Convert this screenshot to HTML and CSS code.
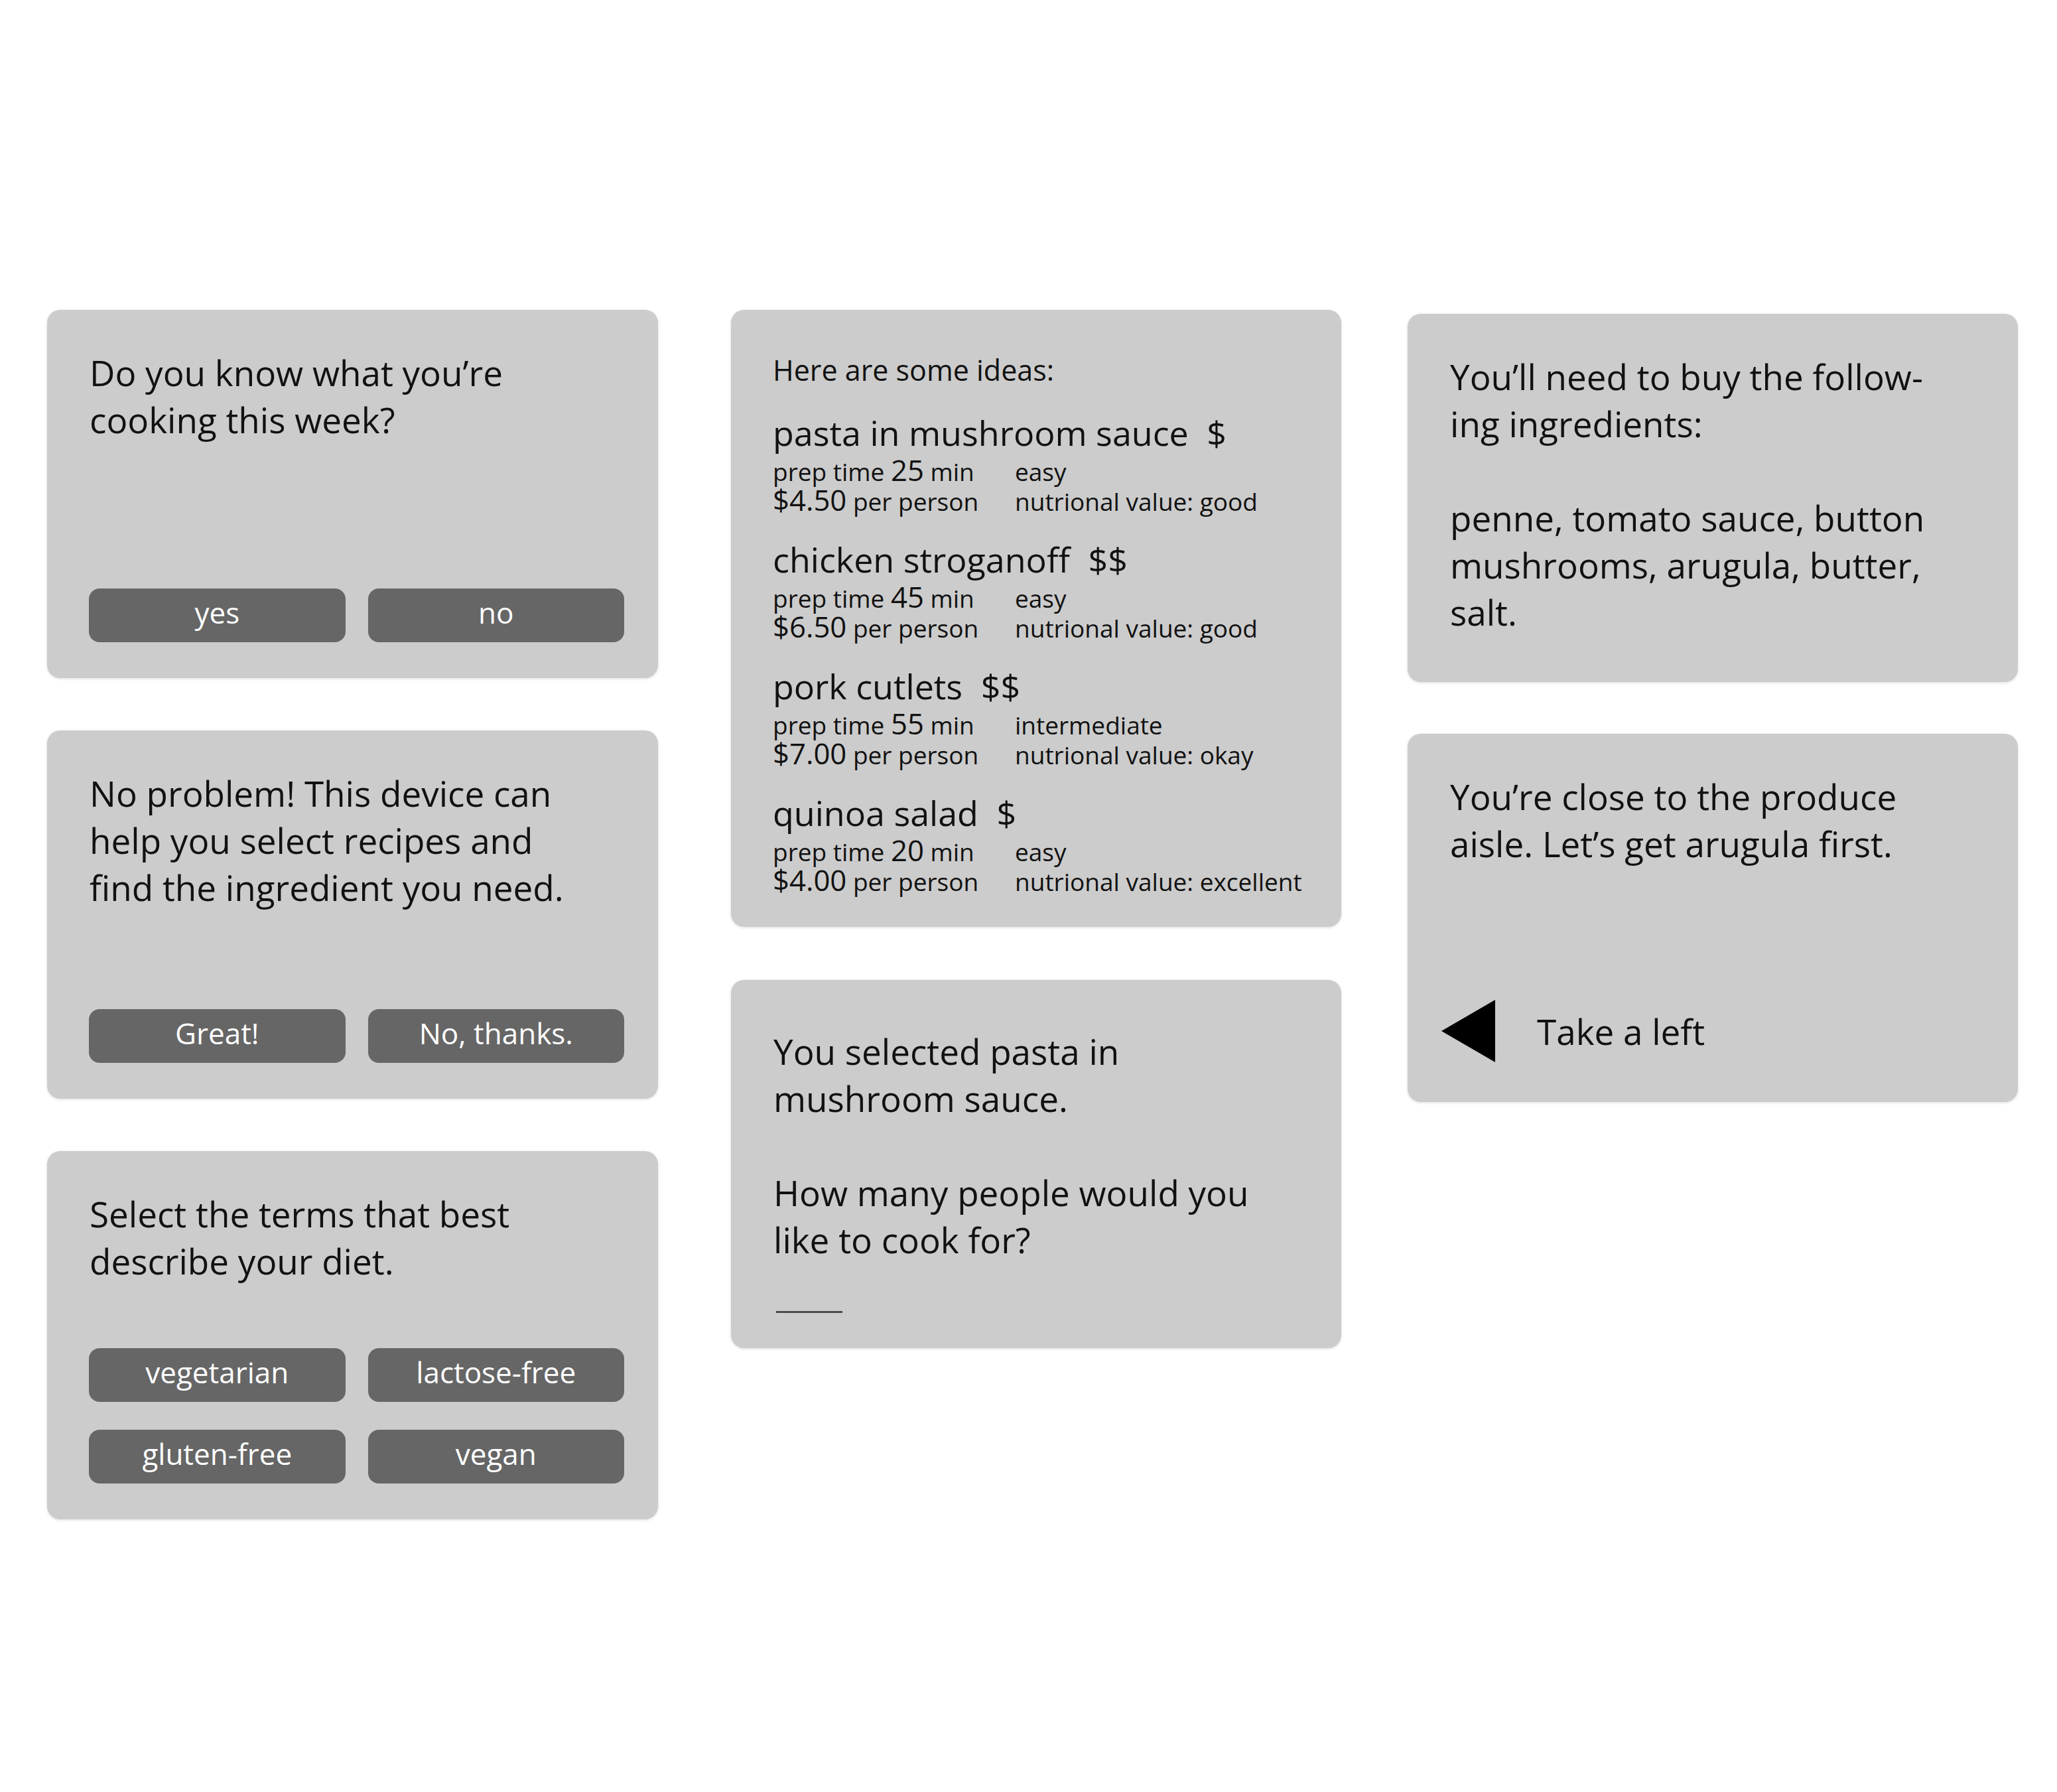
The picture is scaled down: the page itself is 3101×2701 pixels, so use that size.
FILE: index.html
```html
<!DOCTYPE html>
<html lang="en">
<head>
<meta charset="utf-8">
<title>Recipe assistant – screens</title>
<link rel="stylesheet" href="styles.css">
</head>
<body>
<main class="board">
  <section class="col col-left">
    <div class="card">
      <p class="msg">Do you know what you’re<br>cooking this week?</p>
      <div class="choices">
        <button class="btn" type="button">yes</button>
        <button class="btn" type="button">no</button>
      </div>
    </div>
    <div class="card">
      <p class="msg">No problem! This device can<br>help you select recipes and<br>find the ingredient you need.</p>
      <div class="choices">
        <button class="btn" type="button">Great!</button>
        <button class="btn" type="button">No, thanks.</button>
      </div>
    </div>
    <div class="card">
      <p class="msg">Select the terms that best<br>describe your diet.</p>
      <div class="choices">
        <button class="btn" type="button">vegetarian</button>
        <button class="btn" type="button">lactose-free</button>
        <button class="btn" type="button">gluten-free</button>
        <button class="btn" type="button">vegan</button>
      </div>
    </div>
  </section>

  <section class="col col-mid">
    <div class="card card-ideas">
      <p class="ideas-intro">Here are some ideas:</p>
      <div class="recipes">
        <div class="recipe">
          <p class="recipe-title">pasta in mushroom sauce <span class="price">$</span></p>
          <div class="recipe-meta">
            <span>prep time <span class="num">25</span> min</span><span>easy</span>
            <span><span class="num">$4.50</span> per person</span><span>nutrional value: good</span>
          </div>
        </div>
        <div class="recipe">
          <p class="recipe-title">chicken stroganoff <span class="price">$$</span></p>
          <div class="recipe-meta">
            <span>prep time <span class="num">45</span> min</span><span>easy</span>
            <span><span class="num">$6.50</span> per person</span><span>nutrional value: good</span>
          </div>
        </div>
        <div class="recipe">
          <p class="recipe-title">pork cutlets <span class="price">$$</span></p>
          <div class="recipe-meta">
            <span>prep time <span class="num">55</span> min</span><span>intermediate</span>
            <span><span class="num">$7.00</span> per person</span><span>nutrional value: okay</span>
          </div>
        </div>
        <div class="recipe">
          <p class="recipe-title">quinoa salad <span class="price">$</span></p>
          <div class="recipe-meta">
            <span>prep time <span class="num">20</span> min</span><span>easy</span>
            <span><span class="num">$4.00</span> per person</span><span>nutrional value: excellent</span>
          </div>
        </div>
      </div>
    </div>
    <div class="card card-select">
      <p class="msg">You selected pasta in<br>mushroom sauce.</p>
      <p class="msg msg-next">How many people would you<br>like to cook for?</p>
      <div class="answer-line"></div>
    </div>
  </section>

  <section class="col col-right">
    <div class="card">
      <p class="msg">You’ll need to buy the follow-<br>ing ingredients:</p>
      <p class="msg msg-next">penne, tomato sauce, button<br>mushrooms, arugula, butter,<br>salt.</p>
    </div>
    <div class="card">
      <p class="msg">You’re close to the produce<br>aisle. Let’s get arugula first.</p>
      <div class="direction">
        <svg class="arrow" width="81" height="94" viewBox="0 0 81 94" aria-hidden="true"><polygon points="0,47 81,0 81,94" fill="#000"/></svg>
        <span class="direction-text">Take a left</span>
      </div>
    </div>
  </section>
</main>
</body>
</html>
```

FILE: styles.css
```css
* {
  box-sizing: border-box;
}

html,
body {
  margin: 0;
  background: #ffffff;
}

body {
  font-family: "Open Sans", "Noto Sans", sans-serif;
  color: #111111;
  width: 3101px;
  height: 2701px;
  overflow: hidden;
}

.board {
  display: flex;
  align-items: flex-start;
  padding: 467px 0 0 71px;
}

.col {
  display: flex;
  flex-direction: column;
  width: 920px;
}

.col-left {
  width: 921px;
  gap: 79px;
  margin-right: 110px;
}

.col-mid {
  gap: 80px;
  margin-right: 100px;
}

.col-right {
  gap: 78px;
  padding-top: 6px;
}

.card {
  display: flex;
  flex-direction: column;
  height: 555px;
  padding: 59px 51px 54px 63px;
  background: #cccccc;
  border-radius: 20px;
  box-shadow: 0 1px 4px rgba(0, 0, 0, 0.14);
}

.msg {
  margin: 0;
  padding-left: 1px;
  font-size: 53px;
  line-height: 71px;
  white-space: nowrap;
}

.msg-next {
  margin-top: 71px;
}

.choices {
  margin-top: auto;
  display: grid;
  grid-template-columns: 1fr 1fr;
  column-gap: 34px;
  row-gap: 42px;
}

.btn {
  display: flex;
  align-items: center;
  justify-content: center;
  height: 81px;
  padding: 0 0 8px;
  border: 0;
  border-radius: 16px;
  background: #666666;
  color: #ffffff;
  font-family: inherit;
  font-size: 44px;
  line-height: 73px;
}

/* recipe ideas card */
.card-ideas {
  height: auto;
  padding: 65px 51px 46px 63px;
}

.ideas-intro {
  margin: 0 0 38px;
  font-size: 43px;
  line-height: 52px;
}

.recipes {
  display: flex;
  flex-direction: column;
  gap: 35px;
}

.recipe-title {
  margin: 0 0 6px;
  font-size: 52px;
  line-height: 60px;
  white-space: nowrap;
}

.price {
  margin-left: 14px;
}

.recipe-meta {
  display: grid;
  grid-template-columns: 365px auto;
  font-size: 37px;
  line-height: 45px;
  white-space: nowrap;
}

.num {
  font-size: 1.18em;
  line-height: 37px;
}

/* selection card */
.card-select {
  padding-top: 72px;
  padding-bottom: 53px;
}

.answer-line {
  width: 100px;
  height: 3px;
  margin: auto 0 0 5px;
  background: #4d4d4d;
}

/* direction card */
.direction {
  display: flex;
  align-items: center;
  gap: 63px;
  margin-top: auto;
  margin-bottom: 6px;
  margin-left: -12px;
}

.arrow {
  display: block;
  flex: none;
}

.direction-text {
  font-size: 53px;
  line-height: 71px;
}
```
